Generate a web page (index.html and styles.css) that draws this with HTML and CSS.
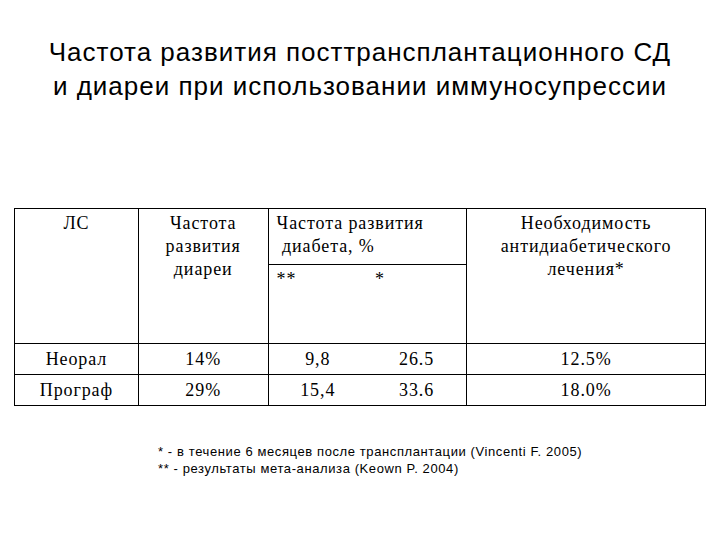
FILE: index.html
```html
<!DOCTYPE html>
<html lang="ru">
<head>
<meta charset="utf-8">
<link rel="stylesheet" href="styles.css">
</head>
<body>
<div class="slide">
  <h1 class="title">Частота развития посттрансплантационного СД<br>и диареи при использовании иммуносупрессии</h1>
  <table class="data">
    <colgroup>
      <col class="c1"><col class="c2"><col class="c3a"><col class="c3b"><col class="c4">
    </colgroup>
    <tr class="h1">
      <td rowspan="2" class="ctr">ЛС</td>
      <td rowspan="2" class="ctr">Частота<br>развития<br>диареи</td>
      <td colspan="2" class="lft">Частота развития<br>&nbsp;диабета, %</td>
      <td rowspan="2" class="ctr">Необходимость<br>антидиабетического<br>лечения*</td>
    </tr>
    <tr class="h2">
      <td class="lft nr">**</td>
      <td class="lft nl">*</td>
    </tr>
    <tr class="row">
      <td>Неорал</td><td>14%</td><td class="nr">9,8</td><td class="nl">26.5</td><td>12.5%</td>
    </tr>
    <tr class="row">
      <td>Програф</td><td>29%</td><td class="nr">15,4</td><td class="nl">33.6</td><td>18.0%</td>
    </tr>
  </table>
  <div class="notes">
    <p>* - в течение 6 месяцев после трансплантации (Vincenti F. 2005)</p>
    <p>** - результаты мета-анализа (Keown P. 2004)</p>
  </div>
</div>
</body>
</html>
```
FILE: styles.css
```css
html, body { margin: 0; padding: 0; background: #fff; }
.slide { width: 720px; height: 540px; }
.title {
  margin: 0;
  padding-top: 35px;
  font-family: "Liberation Sans", Arial, sans-serif;
  font-weight: normal;
  font-size: 26px;
  letter-spacing: 1px;
  line-height: 34px;
  text-align: center;
  color: #000;
  height: 208px;
  box-sizing: border-box;
}
.data {
  margin-left: 14px;
  width: 692px;
  border-collapse: collapse;
  font-family: "Liberation Serif", "Times New Roman", serif;
  font-size: 18px;
  letter-spacing: 0.9px;
  color: #000;
}
.c1 { width: 124px; }
.c2 { width: 130px; }
.c3a { width: 99px; }
.c3b { width: 100px; }
.c4 { width: 239px; }
.data td { border: 1px solid #000; padding: 0; vertical-align: top; text-align: center; }
.data td.nr { border-right: none; }
.data td.nl { border-left: none; }
.h1 td { line-height: 23px; padding-top: 3px; height: 52px; }
.h1 td.lft { text-align: left; padding-left: 8px; }
.h2 td { height: 75px; line-height: 22px; padding-top: 3px; }
.h2 td.lft { text-align: left; padding-left: 8px; }
.row td { height: 30px; line-height: 30px; }
.notes {
  margin-left: 158px;
  margin-top: 37px;
  font-family: "Liberation Sans", Arial, sans-serif;
  font-size: 13px;
  letter-spacing: 0.6px;
  line-height: 17px;
  color: #000;
}
.notes p { margin: 0; }
```
